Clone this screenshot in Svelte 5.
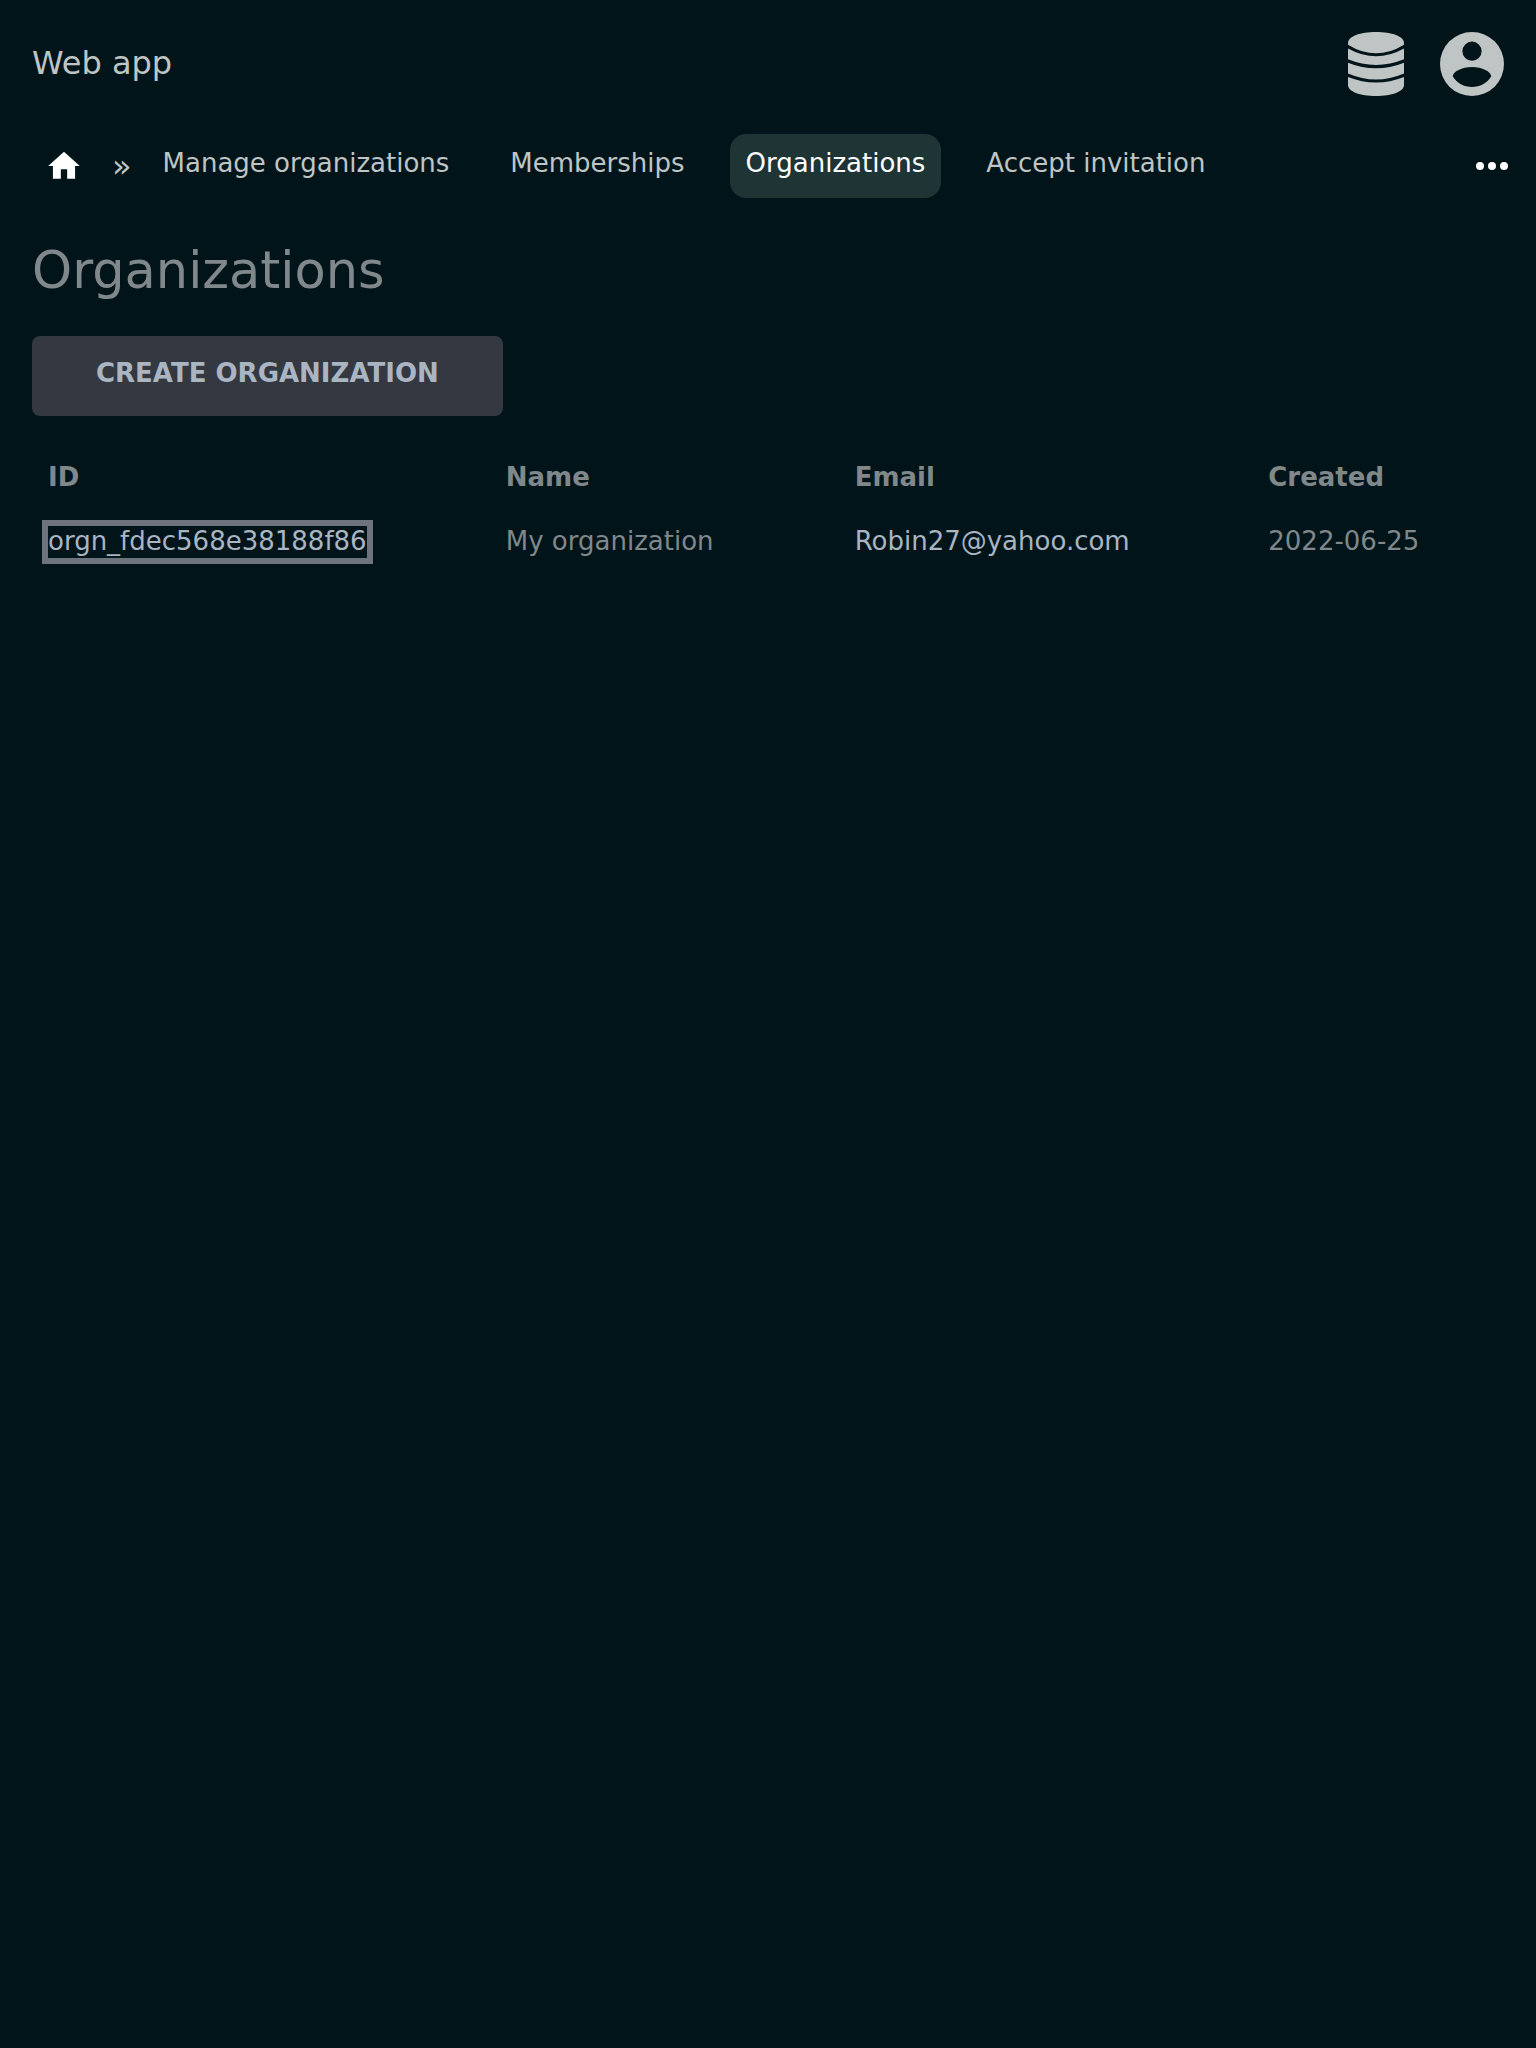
<script lang="ts">
  const links = [
    { label: 'Manage organizations', active: false },
    { label: 'Memberships', active: false },
    { label: 'Organizations', active: true },
    { label: 'Accept invitation', active: false },
  ];

  const organizations = [
    { id: 'orgn_fdec568e38188f86', name: 'My organization', email: 'Robin27@yahoo.com', created: '2022-06-25' },
  ];
</script>

<header class="top">
  <a class="brand" href="#home">Web app</a>
  <div class="actions">
    <button type="button" class="icon-button" aria-label="Data">
      <svg viewBox="0 0 56 64" height="64" aria-hidden="true">
        <path d="M0 11C0 4.500 12 0 28 0s28 4.500 28 11v1.700Q28 30 0 12.700z" />
        <path d="M0 16.500Q28 32 56 16.500V27.300Q28 38.700 0 27.300z" />
        <path d="M0 30.700Q28 42 56 30.700V41.500Q28 53.500 0 41.500z" />
        <path d="M0 45Q28 56 56 45v8C56 59.500 44 64 28 64S0 59.500 0 53z" />
      </svg>
    </button>
    <button type="button" class="icon-button" aria-label="Account">
      <svg viewBox="0 0 64 64" height="64" aria-hidden="true">
        <path fill-rule="evenodd" d="M32 0a32 32 0 1 0 0 64a32 32 0 0 0 0-64zM32 9.600a9.600 9.600 0 1 1 0 19.200a9.600 9.600 0 0 1 0-19.200zM32 35c10 0 19.200 4.500 19.200 9.500C47 51 40 55 32 55S17 51 12.800 44.500C12.800 39.500 22 35 32 35z" />
      </svg>
    </button>
  </div>
</header>

<nav class="nav" aria-label="Main">
  <a class="home" href="#home" aria-label="Home">
    <svg viewBox="0 0 24 24" width="38" height="38" aria-hidden="true">
      <path d="M10 20v-6h4v6h5v-8h3L12 3 2 12h3v8z" />
    </svg>
  </a>
  <span class="separator">»</span>
  <div class="links">
    {#each links as link}
      <a href="#{link.label}" class="link" class:active={link.active} aria-current={link.active ? 'page' : undefined}>{link.label}</a>
    {/each}
  </div>
  <button type="button" class="more" aria-label="More">
    <svg viewBox="0 0 24 24" width="48" height="48" aria-hidden="true">
      <circle cx="6" cy="12" r="2" />
      <circle cx="12" cy="12" r="2" />
      <circle cx="18" cy="12" r="2" />
    </svg>
  </button>
</nav>

<main>
  <h1>Organizations</h1>
  <button type="button" class="create">Create organization</button>
  <table>
    <colgroup>
      <col class="col-id" />
      <col class="col-name" />
      <col class="col-email" />
      <col />
    </colgroup>
    <thead>
      <tr>
        <th scope="col">ID</th>
        <th scope="col">Name</th>
        <th scope="col">Email</th>
        <th scope="col">Created</th>
      </tr>
    </thead>
    <tbody>
      {#each organizations as org, i}
        <tr>
          <td><a href="#{org.id}" class:focused={i === 0}>{org.id}</a></td>
          <td>{org.name}</td>
          <td><a href="mailto:{org.email}">{org.email}</a></td>
          <td>{org.created}</td>
        </tr>
      {/each}
    </tbody>
  </table>
</main>

<style>
  :global(body) {
    background: #001419;
    color: #80888b;
    font-family: 'DejaVu Sans', sans-serif;
    font-size: 26px;
    line-height: 32px;
  }

  a {
    color: #aab5c3;
    text-decoration: none;
  }

  button {
    margin: 0;
    padding: 0;
    border: 0;
    background: none;
    font: inherit;
    color: inherit;
    cursor: pointer;
  }

  svg {
    display: block;
    fill: currentColor;
  }

  .top {
    display: flex;
    align-items: center;
    justify-content: space-between;
    padding: 32px;
  }

  .brand {
    padding-bottom: 2px;
    color: #bfc4c5;
    font-size: 32px;
  }

  .actions {
    display: flex;
    gap: 32px;
    color: #bfc4c5;
  }

  .icon-button {
    display: flex;
    justify-content: center;
    width: 64px;
  }

  .nav {
    display: flex;
    align-items: center;
    padding: 6px 20px 6px 45px;
  }

  .home,
  .more {
    color: #fff;
  }

  .separator {
    margin: 0 15px 0 29px;
    color: #bfc4c5;
    font-size: 32px;
  }

  .links {
    display: flex;
    flex: 1;
    gap: 29px;
  }

  .link {
    padding: 13px 16px 19px;
    border-radius: 16px;
    color: #bfc4c5;
  }

  .link.active {
    background: #1e3435;
    color: #fff;
  }

  main {
    padding: 32px;
  }

  h1 {
    margin: 0 0 31px;
    padding-top: 1px;
    font-size: 51px;
    font-weight: 400;
    line-height: 68px;
  }

  .create {
    padding: 21px 64px 27px;
    border-radius: 8px;
    background: #343840;
    color: #aab5c3;
    font-weight: 700;
    text-transform: uppercase;
  }

  table {
    width: 100%;
    margin-top: 29px;
    border-collapse: collapse;
    table-layout: fixed;
  }

  .col-id {
    width: 31.1%;
  }

  .col-name {
    width: 23.7%;
  }

  .col-email {
    width: 28.1%;
  }

  th,
  td {
    padding: 16px;
    text-align: left;
  }

  .focused {
    padding-bottom: 2px;
    outline: 6px solid #6d747d;
  }
</style>
